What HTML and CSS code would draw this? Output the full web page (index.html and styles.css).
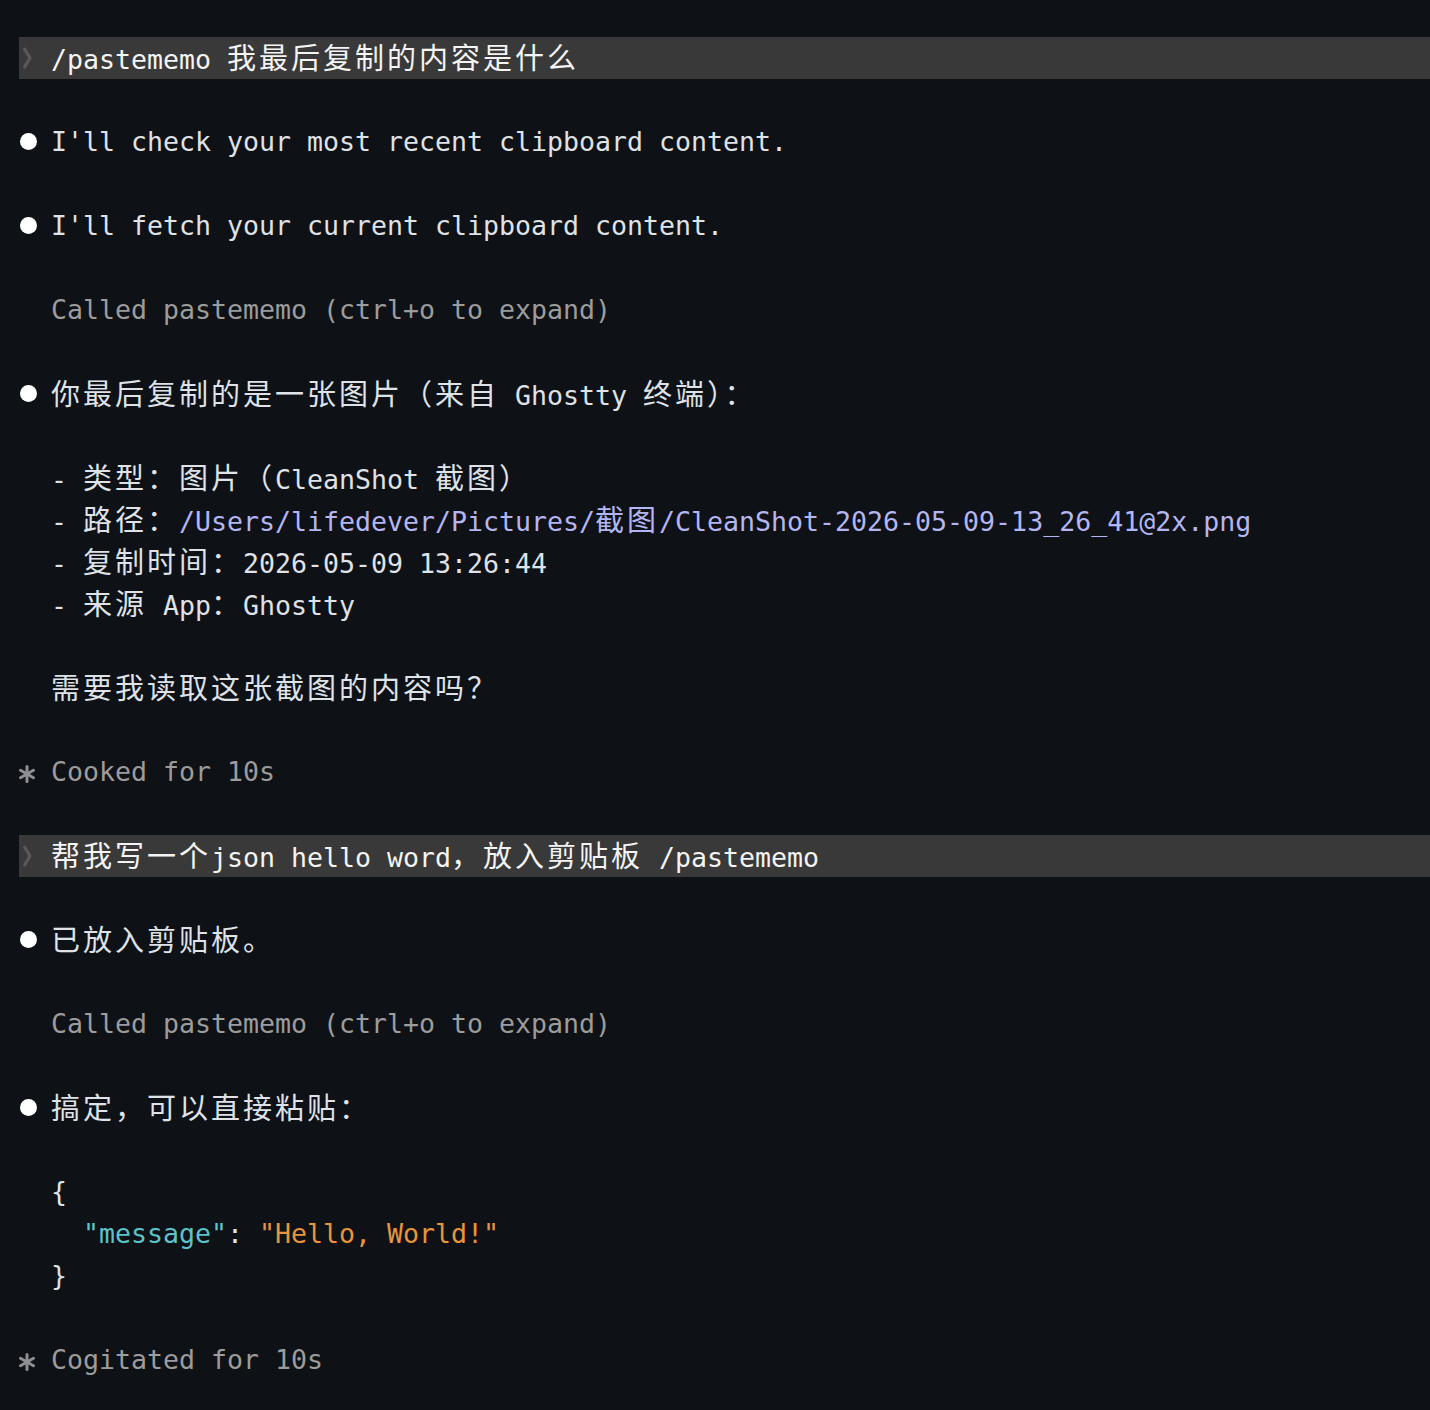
FILE: index.html
```html
<!DOCTYPE html>
<html lang="zh-CN">
<head>
<meta charset="utf-8">
<title>Terminal</title>
<link rel="stylesheet" href="styles.css">
</head>
<body>
<div class="term">
  <div class="line bar"><span class="gut"><svg class="chev" viewBox="0 0 12 24" width="12" height="24"><polyline points="3,2 9,12 3,22"/></svg></span><span class="txt">/pastememo <span class="c">我最后复制的内容是什么</span></span></div>
  <div class="line"></div>
  <div class="line"><span class="gut"><span class="dot"></span></span><span class="txt">I'll check your most recent clipboard content.</span></div>
  <div class="line"></div>
  <div class="line"><span class="gut"><span class="dot"></span></span><span class="txt">I'll fetch your current clipboard content.</span></div>
  <div class="line"></div>
  <div class="line"><span class="gut"></span><span class="txt dim">Called pastememo (ctrl+o to expand)</span></div>
  <div class="line"></div>
  <div class="line"><span class="gut"><span class="dot"></span></span><span class="txt"><span class="c">你最后复制的是一张图片（来自</span> Ghostty <span class="c">终端）：</span></span></div>
  <div class="line"></div>
  <div class="line"><span class="gut"></span><span class="txt">- <span class="c">类型：图片（</span>CleanShot <span class="c">截图）</span></span></div>
  <div class="line"><span class="gut"></span><span class="txt">- <span class="c">路径：</span><span class="path">/Users/lifedever/Pictures/<span class="c">截图</span>/CleanShot-2026-05-09-13_26_41@2x.png</span></span></div>
  <div class="line"><span class="gut"></span><span class="txt">- <span class="c">复制时间：</span>2026-05-09 13:26:44</span></div>
  <div class="line"><span class="gut"></span><span class="txt">- <span class="c">来源</span> App<span class="c">：</span>Ghostty</span></div>
  <div class="line"></div>
  <div class="line"><span class="gut"></span><span class="txt"><span class="c">需要我读取这张截图的内容吗？</span></span></div>
  <div class="line"></div>
  <div class="line"><span class="gut"><svg class="star" viewBox="0 0 18 18" width="18" height="18"><line x1="9" y1="1.5" x2="9" y2="16.5"/><line x1="2.5" y1="5.25" x2="15.5" y2="12.75"/><line x1="2.5" y1="12.75" x2="15.5" y2="5.25"/></svg></span><span class="txt dim">Cooked for 10s</span></div>
  <div class="line"></div>
  <div class="line bar"><span class="gut"><svg class="chev" viewBox="0 0 12 24" width="12" height="24"><polyline points="3,2 9,12 3,22"/></svg></span><span class="txt"><span class="c">帮我写一个</span>json hello word<span class="c">，放入剪贴板</span> /pastememo</span></div>
  <div class="line"></div>
  <div class="line"><span class="gut"><span class="dot"></span></span><span class="txt"><span class="c">已放入剪贴板。</span></span></div>
  <div class="line"></div>
  <div class="line"><span class="gut"></span><span class="txt dim">Called pastememo (ctrl+o to expand)</span></div>
  <div class="line"></div>
  <div class="line"><span class="gut"><span class="dot"></span></span><span class="txt"><span class="c">搞定，可以直接粘贴：</span></span></div>
  <div class="line"></div>
  <div class="line"><span class="gut"></span><span class="txt">{</span></div>
  <div class="line"><span class="gut"></span><span class="txt">  <span class="key">"message"</span>: <span class="str">"Hello, World!"</span></span></div>
  <div class="line"><span class="gut"></span><span class="txt">}</span></div>
  <div class="line"></div>
  <div class="line"><span class="gut"><svg class="star" viewBox="0 0 18 18" width="18" height="18"><line x1="9" y1="1.5" x2="9" y2="16.5"/><line x1="2.5" y1="5.25" x2="15.5" y2="12.75"/><line x1="2.5" y1="12.75" x2="15.5" y2="5.25"/></svg></span><span class="txt dim">Cogitated for 10s</span></div>
</div>
</body>
</html>
```
FILE: styles.css
```css
html, body {
  margin: 0;
  padding: 0;
  background: #0e1116;
}

.term {
  padding: 37px 0 0 19px;
  min-height: 1410px;
  box-sizing: border-box;
  font-family: "DejaVu Sans Mono", "Noto Sans CJK SC", monospace;
  font-size: 26.58px;
  color: #dfe2e7;
}

.line {
  height: 42px;
  line-height: 42px;
  display: flex;
  align-items: center;
  white-space: pre;
}

.bar {
  background: #393939;
  color: #f4f4f4;
}

.gut {
  flex: none;
  width: 32px;
  height: 42px;
  display: flex;
  align-items: center;
  position: relative;
}

.txt {
  white-space: pre;
  line-height: 42px;
}

.c {
  font-family: "Noto Sans CJK SC", sans-serif;
  font-size: 29px;
  font-weight: 400;
  letter-spacing: 3px;
  line-height: 42px;
}

.dot {
  width: 17px;
  height: 17px;
  border-radius: 50%;
  background: #ffffff;
  margin-left: 1px;
  margin-top: -1px;
}

.chev {
  margin-left: 2px;
  fill: none;
  stroke: #595959;
  stroke-width: 3.2;
  stroke-linejoin: round;
}

.star {
  margin-left: -1px;
  margin-top: 4px;
  stroke: #8d8f93;
  stroke-width: 3;
  stroke-linecap: round;
}

.dim {
  color: #9c9c9c;
}

.path {
  color: #b3b6f3;
}

.key {
  color: #5cc3cb;
}

.str {
  color: #e8953b;
}
```
